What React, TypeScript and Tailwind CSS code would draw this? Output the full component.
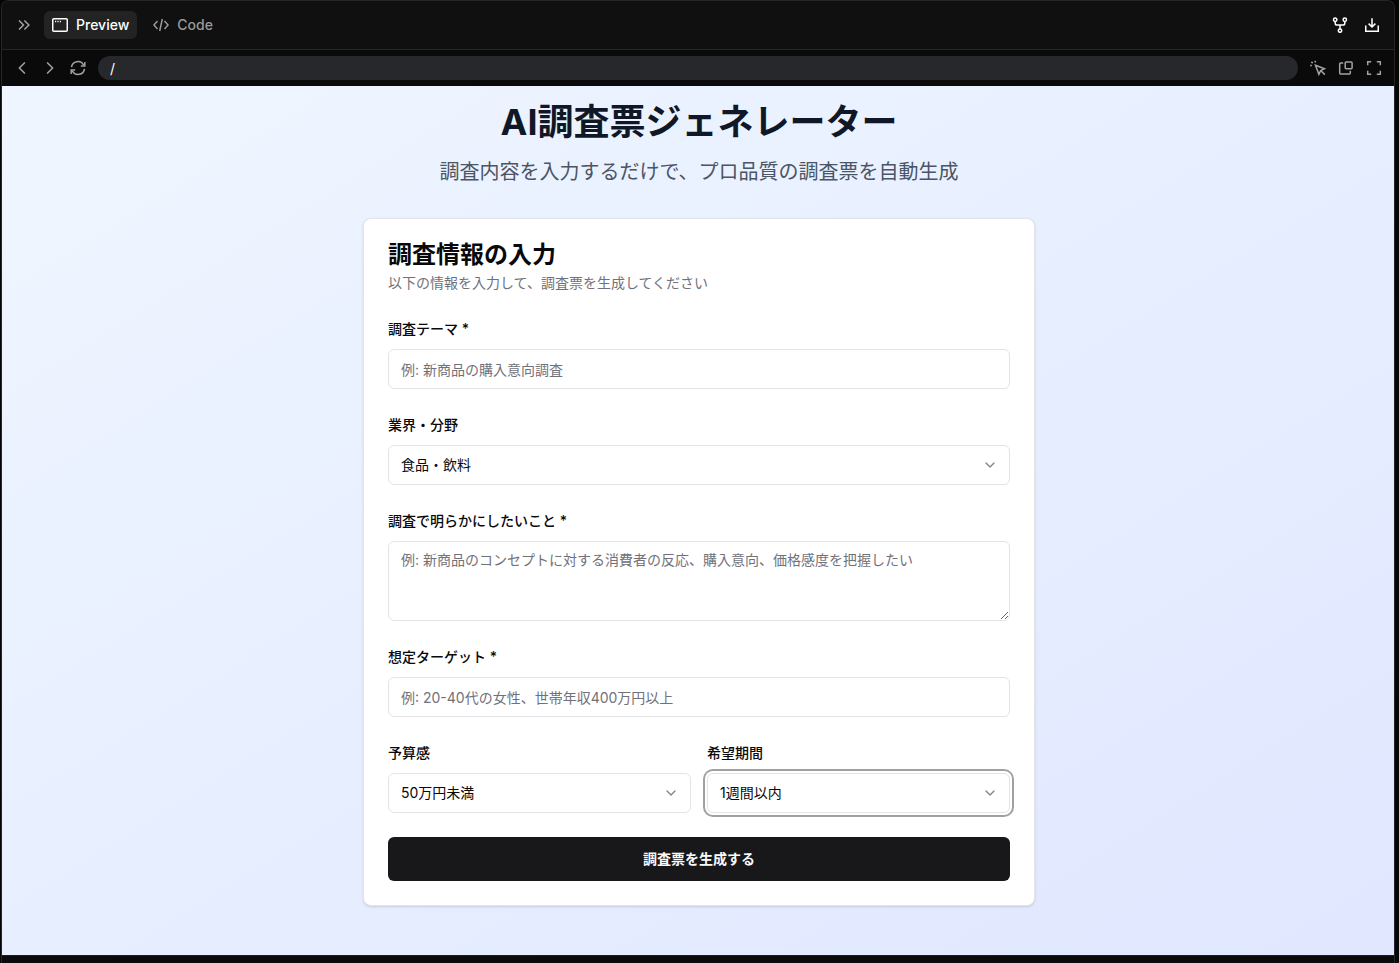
import { useState } from 'react';
import type { ReactNode } from 'react';
import { ChevronDown } from 'lucide-react';

const control =
  'w-full rounded-md border border-[#e4e4e7] bg-white px-3 text-sm text-[#09090b] placeholder:text-[#71717a] outline-none focus:ring-2 focus:ring-[#a1a1aa] focus:ring-offset-2';

const Field = ({ id, label, children }: { id: string; label: string; children: ReactNode }) => (
  <div>
    <label htmlFor={id} className="mb-2 block text-sm leading-6 font-medium text-[#09090b]">
      {label}
    </label>
    {children}
  </div>
);

type SelectProps = {
  id: string;
  options: string[];
  active?: boolean;
  onFocus?: () => void;
};

const Select = ({ id, options, active, onFocus }: SelectProps) => (
  <div className="relative">
    <select
      id={id}
      onFocus={onFocus}
      className={`${control} h-10 appearance-none ${active ? 'ring-2 ring-[#a1a1a5] ring-offset-2' : ''}`}
    >
      {options.map((option) => (
        <option key={option}>{option}</option>
      ))}
    </select>
    <ChevronDown className="pointer-events-none absolute top-3 right-3 size-4 text-[#09090b] opacity-50" />
  </div>
);

const Icon = ({ children }: { children: ReactNode }) => (
  <svg className="size-4" viewBox="0 0 16 16" fill="none" stroke="currentColor" strokeWidth="1.5">
    {children}
  </svg>
);

const CollapseIcon = () => (
  <Icon>
    <path d="M3 3.4 7.5 8 3 12.6M8.4 3.4 12.9 8l-4.5 4.6" />
  </Icon>
);

const BackIcon = () => (
  <Icon>
    <path d="M10.9 2.5 5.4 8l5.5 5.5" />
  </Icon>
);

const ForwardIcon = () => (
  <Icon>
    <path d="M5.1 2.5 10.6 8l-5.5 5.5" />
  </Icon>
);

const PreviewIcon = () => (
  <Icon>
    <rect x="0.75" y="1.75" width="14.5" height="12.5" rx="1" />
    <path d="M3 4.5h1.2M5.4 4.5h1.2M7.8 4.5H9" />
  </Icon>
);

const CodeIcon = () => (
  <Icon>
    <path d="M4.5 4 .9 8l3.6 4M11.5 4l3.6 4-3.6 4M9.3 2 6.7 14" />
  </Icon>
);

const RefreshIcon = () => (
  <Icon>
    <path d="M1.5 7.2A6.4 6.4 0 0 1 13.6 5.2M14.5 8.8A6.4 6.4 0 0 1 2.4 10.8" />
    <path d="M14.8 2v3.9h-4M1.2 14v-3.9h4" />
  </Icon>
);

const ForkIcon = () => (
  <Icon>
    <circle cx="3.2" cy="2.8" r="1.7" />
    <circle cx="12.8" cy="2.8" r="1.7" />
    <circle cx="8" cy="13.6" r="1.7" />
    <path d="M3.2 4.5v1.7c0 1 .8 1.8 1.8 1.8h6c1 0 1.8-.8 1.8-1.8V4.5M8 8v3.9" />
  </Icon>
);

const DownloadIcon = () => (
  <Icon>
    <path d="M1.75 8.5v5.75h12.5V8.5M8 1.2v8.6M4.6 6.6 8 10l3.4-3.4" />
  </Icon>
);

const InspectIcon = () => (
  <Icon>
    <path d="m5.5 5.3 9 3.4-3.8 1.8-1.8 3.8z" />
    <path d="m10.7 10.5 4.1 4.1M5.2.8v1.7M.2 5.6h1.7M1.4 1.8l1.3 1.3" />
  </Icon>
);

const WindowsIcon = () => (
  <Icon>
    <rect x="7.2" y="1.9" width="6.9" height="6.9" rx="1" />
    <path d="M5.2 3H2.6a.9.9 0 0 0-.9.9v9.2c0 .5.4.9.9.9h8.8c.5 0 .9-.4.9-.9V10.8" />
  </Icon>
);

const ExpandIcon = () => (
  <Icon>
    <path d="M1.7 5.2V1.7h3.5M10.8 1.7h3.5v3.5M14.3 10.8v3.5h-3.5M5.2 14.3H1.7v-3.5" />
  </Icon>
);

const TopBar = () => (
  <header className="flex h-[49px] items-center border-b border-[#262626] bg-[#101010] px-3.5">
    <button type="button" aria-label="Collapse" className="text-[#a3a3a3]">
      <CollapseIcon />
    </button>
    <div className="ml-3 flex items-center gap-2 text-sm font-medium">
      <button type="button" className="flex h-7 items-center gap-2 rounded-md bg-[#232323] px-2 text-white">
        <PreviewIcon />
        Preview
      </button>
      <button type="button" className="flex h-7 items-center gap-2 px-2 text-[#9a9a9a]">
        <CodeIcon />
        Code
      </button>
    </div>
    <div className="ml-auto flex items-center gap-4 text-white">
      <button type="button" aria-label="Fork">
        <ForkIcon />
      </button>
      <button type="button" aria-label="Download">
        <DownloadIcon />
      </button>
    </div>
  </header>
);

const AddressBar = () => {
  const [path, setPath] = useState('/');

  return (
    <div className="flex h-9 items-center gap-3 bg-[#0a0a0a] px-3 text-[#a3a3a3]">
      <button type="button" aria-label="Back">
        <BackIcon />
      </button>
      <button type="button" aria-label="Forward">
        <ForwardIcon />
      </button>
      <button type="button" aria-label="Reload">
        <RefreshIcon />
      </button>
      <input
        aria-label="Path"
        value={path}
        onChange={(e) => setPath(e.target.value)}
        className="h-6 min-w-0 flex-1 rounded-full bg-[#27282b] px-3 text-sm text-white outline-none"
      />
      <button type="button" aria-label="Inspect">
        <InspectIcon />
      </button>
      <button type="button" aria-label="Open in new window">
        <WindowsIcon />
      </button>
      <button type="button" aria-label="Full screen">
        <ExpandIcon />
      </button>
    </div>
  );
};

const SurveyForm = () => {
  const [active, setActive] = useState('period');

  return (
    <section className="w-full max-w-2xl rounded-lg border border-[#e4e4e7] bg-white p-6 shadow-sm">
      <h2 className="text-2xl leading-6 font-semibold text-[#09090b]">調査情報の入力</h2>
      <p className="mt-1.5 text-sm text-[#71717a]">以下の情報を入力して、調査票を生成してください</p>

      <form className="mt-6 space-y-6" onSubmit={(e) => e.preventDefault()}>
        <Field id="theme" label="調査テーマ *">
          <input id="theme" placeholder="例: 新商品の購入意向調査" className={`${control} block h-10`} />
        </Field>

        <Field id="industry" label="業界・分野">
          <Select
            id="industry"
            options={['食品・飲料', 'IT・通信', '金融・保険']}
            active={active === 'industry'}
            onFocus={() => setActive('industry')}
          />
        </Field>

        <Field id="purpose" label="調査で明らかにしたいこと *">
          <textarea
            id="purpose"
            placeholder="例: 新商品のコンセプトに対する消費者の反応、購入意向、価格感度を把握したい"
            className={`${control} block h-20 resize-y py-2`}
          />
        </Field>

        <Field id="target" label="想定ターゲット *">
          <input id="target" placeholder="例: 20-40代の女性、世帯年収400万円以上" className={`${control} block h-10`} />
        </Field>

        <div className="grid grid-cols-2 gap-4">
          <Field id="budget" label="予算感">
            <Select
              id="budget"
              options={['50万円未満', '50〜100万円', '100万円以上']}
              active={active === 'budget'}
              onFocus={() => setActive('budget')}
            />
          </Field>
          <Field id="period" label="希望期間">
            <Select
              id="period"
              options={['1週間以内', '2週間以内', '1ヶ月以内']}
              active={active === 'period'}
              onFocus={() => setActive('period')}
            />
          </Field>
        </div>

        <button
          type="submit"
          className="block h-11 w-full rounded-md bg-[#18181b] text-sm font-semibold text-[#fafafa]"
        >
          調査票を生成する
        </button>
      </form>
    </section>
  );
};

export default function App() {
  return (
    <div className="flex min-h-screen bg-[#060606] pr-1 pl-px font-['Inter','Noto_Sans_CJK_JP',sans-serif]">
      <div className="flex min-w-0 flex-1 flex-col rounded-t-lg border border-b-0 border-[#262626] bg-[#0a0a0a]">
        <div className="overflow-hidden rounded-t-lg">
          <TopBar />
          <AddressBar />
        </div>

        {/* Previewed page */}
        <main className="flex flex-1 flex-col items-center bg-linear-to-br from-blue-50 to-indigo-100 pt-4 pr-4 pb-12 pl-4.5">
          <h1 className="text-4xl font-bold text-gray-900">AI調査票ジェネレーター</h1>
          <p className="mt-4 mb-8 text-xl text-gray-600">
            調査内容を入力するだけで、プロ品質の調査票を自動生成
          </p>
          <SurveyForm />
        </main>

        <div className="h-2 border-t border-[#1c1c24]" />
      </div>
    </div>
  );
}
